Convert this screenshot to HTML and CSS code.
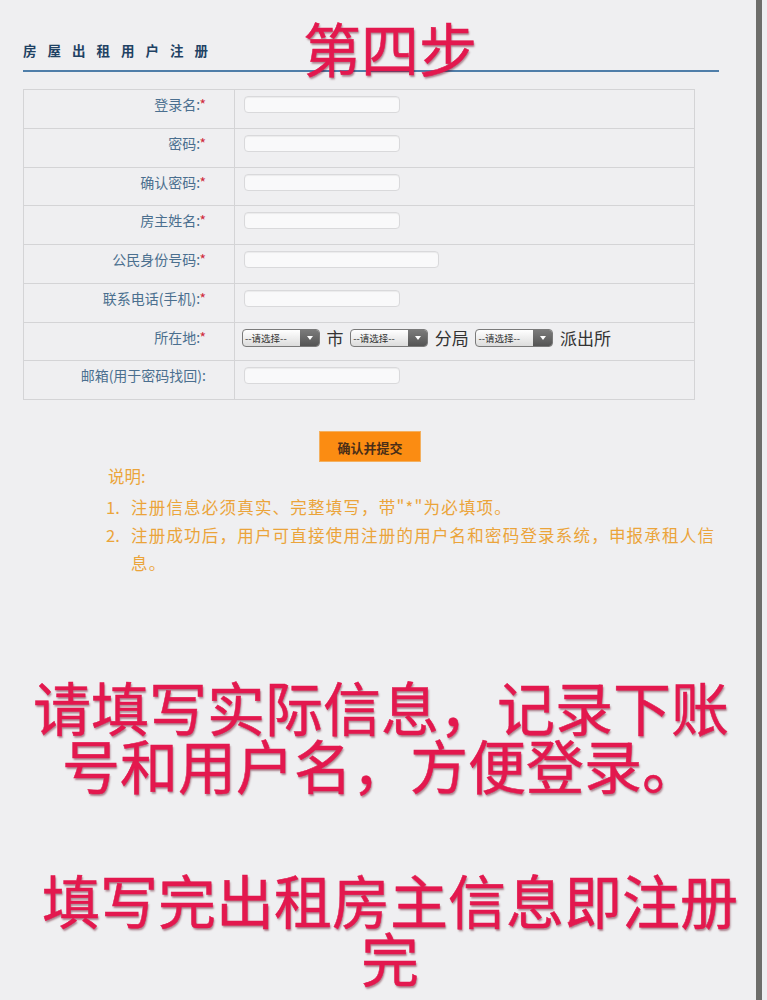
FILE: index.html
```html
<!DOCTYPE html>
<html lang="zh-CN">
<head>
<meta charset="utf-8">
<title>房屋出租用户注册</title>
<link rel="stylesheet" href="styles.css">
</head>
<body>
<div class="page">
  <div class="header">
    <h1 class="title">房屋出租用户注册</h1>
  </div>
  <div class="step">第四步</div>

  <table class="form">
    <tr><td class="lab">登录名:<em>*</em></td><td class="val"><span class="inp"></span></td></tr>
    <tr><td class="lab">密码:<em>*</em></td><td class="val"><span class="inp"></span></td></tr>
    <tr><td class="lab">确认密码:<em>*</em></td><td class="val"><span class="inp"></span></td></tr>
    <tr><td class="lab">房主姓名:<em>*</em></td><td class="val"><span class="inp"></span></td></tr>
    <tr><td class="lab">公民身份号码:<em>*</em></td><td class="val"><span class="inp wide"></span></td></tr>
    <tr><td class="lab">联系电话(手机):<em>*</em></td><td class="val"><span class="inp"></span></td></tr>
    <tr><td class="lab">所在地:<em>*</em></td><td class="val loc">
      <span class="sel"><span class="sel-t">--请选择--</span><span class="sel-b"><svg width="8" height="6" viewBox="0 0 8 6"><path d="M1 1h6L4 5z" fill="#fff"/></svg></span></span>
      <span class="unit">市</span>
      <span class="sel"><span class="sel-t">--请选择--</span><span class="sel-b"><svg width="8" height="6" viewBox="0 0 8 6"><path d="M1 1h6L4 5z" fill="#fff"/></svg></span></span>
      <span class="unit">分局</span>
      <span class="sel"><span class="sel-t">--请选择--</span><span class="sel-b"><svg width="8" height="6" viewBox="0 0 8 6"><path d="M1 1h6L4 5z" fill="#fff"/></svg></span></span>
      <span class="unit">派出所</span>
    </td></tr>
    <tr><td class="lab">邮箱(用于密码找回):</td><td class="val"><span class="inp"></span></td></tr>
  </table>

  <div class="actions"><span class="btn">确认并提交</span></div>

  <div class="notes">
    <div class="notes-h">说明:</div>
    <div class="note"><span class="num">1.</span><span class="txt">注册信息必须真实、完整填写，带"*"为必填项。</span></div>
    <div class="note"><span class="num">2.</span><span class="txt">注册成功后，用户可直接使用注册的用户名和密码登录系统，申报承租人信息。</span></div>
  </div>

  <p class="big big1">请填写实际信息，记录下账号和用户名，方便登录。</p>
  <p class="big big2">填写完出租房主信息即注册完</p>
</div>
</body>
</html>
```

FILE: styles.css
```css
html, body {
  margin: 0;
  padding: 0;
  background: #eeeef0;
}
body {
  font-family: "Noto Sans CJK SC", "Noto Sans", sans-serif;
}
.page {
  position: relative;
  width: 756px;
  min-height: 1000px;
  border-right: 6px solid #6d6d6a;
  background: #efeff1;
  overflow: hidden;
}
.header {
  margin: 0 0 0 23px;
  width: 696px;
  padding-top: 42px;
  padding-bottom: 11px;
  border-bottom: 2px solid #4f7ea9;
}
.title {
  margin: 0;
  font-size: 13.5px;
  line-height: 17px;
  font-weight: 700;
  letter-spacing: 11px;
  color: #1f4264;
}
.step {
  position: absolute;
  left: 303px;
  top: 12px;
  font-size: 58px;
  line-height: 70px;
  font-weight: 400;
  -webkit-text-stroke: 0.5px #e3184e;
  color: #e3184e;
  text-shadow: 1px 2px 2px rgba(90, 0, 25, 0.45);
}
.form {
  margin: 17px 0 0 23px;
  width: 672px;
  border-collapse: collapse;
  border: 1px solid #d2d2d4;
}
.form td {
  border: 1px solid #d4d4d6;
  height: 38.75px;
  box-sizing: border-box;
  vertical-align: top;
  padding: 6px 0 0 0;
}
.lab {
  width: 211px;
  text-align: right;
  padding-right: 28px !important;
  font-size: 14px;
  line-height: 17px;
  color: #4b6f8f;
}
.lab em {
  font-style: normal;
  color: #d02a3c;
}
.val {
  padding-left: 9px !important;
}
.inp {
  display: block;
  width: 156px;
  height: 17px;
  box-sizing: border-box;
  border: 1px solid #d9d9db;
  border-radius: 4px;
  background: #f9f9fa;
  box-shadow: inset 0 1px 1px rgba(0,0,0,0.06);
}
.inp.wide { width: 195px; }
.val.loc {
  padding-left: 7px !important;
  padding-top: 6px !important;
}
.loc {
  white-space: nowrap;
}
.sel {
  display: inline-flex;
  vertical-align: top;
  width: 78px;
  height: 18px;
  box-sizing: border-box;
  border: 1px solid #7a7a7a;
  border-radius: 4px;
  overflow: hidden;
  background: linear-gradient(#ffffff, #dcdcdc);
}
.sel-t {
  flex: 1;
  font-size: 9.5px;
  line-height: 16px;
  color: #333;
  padding-left: 2px;
  white-space: nowrap;
}
.sel-b {
  width: 19px;
  display: flex;
  align-items: center;
  justify-content: center;
  background: linear-gradient(#7b7b7b, #545454);
}
.unit {
  display: inline-block;
  vertical-align: top;
  font-size: 17px;
  line-height: 17px;
  color: #333;
  margin: 0 3px 0 3px;
}
.actions {
  margin-top: 31px;
  padding-left: 319px;
  height: 31px;
}
.btn {
  display: inline-block;
  width: 102px;
  height: 31px;
  line-height: 31px;
  text-align: center;
  background: #fb8c12;
  border: 1px solid #f3b060;
  box-sizing: border-box;
  font-size: 13px;
  font-weight: 700;
  color: #4a2e18;
}
.notes {
  padding-left: 106px;
  width: 615px;
  color: #eba43a;
  font-size: 16.5px;
  line-height: 28px;
}
.notes-h {
  padding-left: 2px;
  margin-bottom: 3px;
}
.note {
  display: flex;
}
.num {
  width: 25px;
  flex: none;
}
.txt {
  letter-spacing: 1.2px;
}
.big {
  margin: 0;
  text-align: center;
  font-size: 58px;
  line-height: 58px;
  font-weight: 400;
  -webkit-text-stroke: 0.5px #e3184e;
  color: #e3184e;
  text-shadow: 1px 2px 2px rgba(90, 0, 25, 0.45);
}
.big1 {
  margin-top: 100px;
  padding: 0 4px 0 10px;
}
.big2 {
  margin-top: 77px;
  line-height: 58px;
  padding: 0 0 0 24px;
}
```
